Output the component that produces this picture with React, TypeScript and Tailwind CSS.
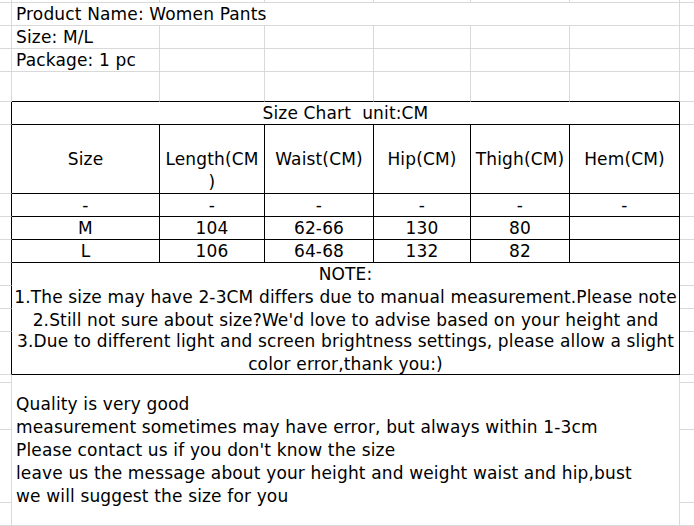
const G = "border-[#d9d9d9]"

const widths = ["B", "C", "D", "E", "F", "G"]

function Gutter({ side, dark, className = "" }: { side: "l" | "r"; dark?: boolean; className?: string }) {
  if (side === "l") {
    return (
      <div
        className={`col-start-1 border-b ${G} border-r ${dark ? "border-r-black" : "border-r-[#d9d9d9]"} ${className}`}
      />
    )
  }
  return <div className={`col-start-8 border-b ${G} ${className}`} />
}

function DataCell({ children, className = "" }: { children?: React.ReactNode; className?: string }) {
  return (
    <div
      className={`flex items-center justify-center border-r border-b border-black whitespace-nowrap overflow-hidden ${className}`}
    >
      {children}
    </div>
  )
}

const header = ["Size", "Length(CM", "Waist(CM)", "Hip(CM)", "Thigh(CM)", "Hem(CM)"]
const rows = [
  ["-", "-", "-", "-", "-", "-"],
  ["M", "104", "62-66", "130", "80", ""],
  ["L", "106", "64-68", "132", "82", ""],
]

const notes = [
  "1.The size may have 2-3CM differs due to manual measurement.Please note",
  "2.Still not sure about size?We'd love to advise based on your height and",
]

const lower = [
  "Quality is very good",
  "measurement sometimes may have error, but always within 1-3cm",
  "Please contact us if you don't know the size",
  "leave us the message about your height and weight waist and hip,bust",
  "we will suggest the size for you",
]

export default function App() {
  return (
    <div className="w-[694px] h-[526px] overflow-hidden bg-white text-black font-['DejaVu_Sans','Verdana',sans-serif] text-[17px] tracking-[0.15px] leading-[23px]">
      <div className="grid grid-cols-[12px_148px_105px_109px_97px_99px_110px_1fr] grid-rows-[3px_23px_23px_23px_30px_23px_69px_23px_23px_23px_23px_23px_23px_43px_8px_47px_73px_23px]">
        {/* row 0 - partially visible */}
        <Gutter side="l" />
        {widths.map((w) => (
          <div key={w} className={`border-r border-b ${G}`} />
        ))}
        <Gutter side="r" />

        {/* product info */}
        <Gutter side="l" />
        <div className={`col-span-6 flex items-center pl-[4px] border-r border-b ${G} whitespace-nowrap`}>
          Product Name: Women Pants
        </div>
        <Gutter side="r" />

        <Gutter side="l" />
        <div className={`flex items-center pl-[4px] border-r border-b ${G} whitespace-nowrap`}>Size: M/L</div>
        {widths.slice(1).map((w) => (
          <div key={w} className={`border-r border-b ${G}`} />
        ))}
        <Gutter side="r" />

        <Gutter side="l" />
        <div className={`flex items-center pl-[4px] border-r border-b ${G} whitespace-nowrap`}>Package: 1 pc</div>
        {widths.slice(1).map((w) => (
          <div key={w} className={`border-r border-b ${G}`} />
        ))}
        <Gutter side="r" />

        <Gutter side="l" />
        {widths.map((w) => (
          <div key={w} className={`border-r ${G} border-b border-b-black`} />
        ))}
        <Gutter side="r" />

        {/* size chart */}
        <Gutter side="l" dark />
        <div className="col-span-6 flex items-center justify-center border-r border-b border-black whitespace-pre">
          Size Chart  unit:CM
        </div>
        <Gutter side="r" />

        <Gutter side="l" dark />
        {header.map((h) => (
          <div
            key={h}
            className="flex flex-col items-center pt-[23px] border-r border-b border-black whitespace-nowrap overflow-hidden"
          >
            <span>{h}</span>
            {h === "Length(CM" && <span>)</span>}
          </div>
        ))}
        <Gutter side="r" />

        {rows.map((r, i) => (
          <div key={i} className="contents">
            <Gutter side="l" dark />
            {r.map((v, j) => (
              <DataCell key={j}>{v}</DataCell>
            ))}
            <Gutter side="r" />
          </div>
        ))}

        {/* notes */}
        <Gutter side="l" dark />
        <div className="col-span-6 flex items-center justify-center border-r border-black">NOTE:</div>
        <Gutter side="r" />

        {notes.map((n) => (
          <div key={n} className="contents">
            <Gutter side="l" dark />
            <div className="col-span-6 flex items-center justify-center border-r border-black whitespace-nowrap overflow-hidden">
              {n}
            </div>
            <Gutter side="r" />
          </div>
        ))}

        <Gutter side="l" dark />
        <div className="col-span-6 flex items-center justify-center text-center border-r border-b border-black whitespace-nowrap">
          <span>
            3.Due to different light and screen brightness settings, please allow a slight
            <br />
            color error,thank you:)
          </span>
        </div>
        <Gutter side="r" />

        {/* lower notes */}
        <Gutter side="l" />
        <div className={`col-span-6 row-span-4 flex flex-col justify-center pl-[4px] border-r border-b ${G} whitespace-nowrap`}>
          {lower.map((l) => (
            <div key={l}>{l}</div>
          ))}
        </div>
        <Gutter side="r" />
        <Gutter side="l" />
        <Gutter side="r" />
        <Gutter side="l" />
        <Gutter side="r" />
        <Gutter side="l" />
        <Gutter side="r" />
      </div>
    </div>
  )
}
